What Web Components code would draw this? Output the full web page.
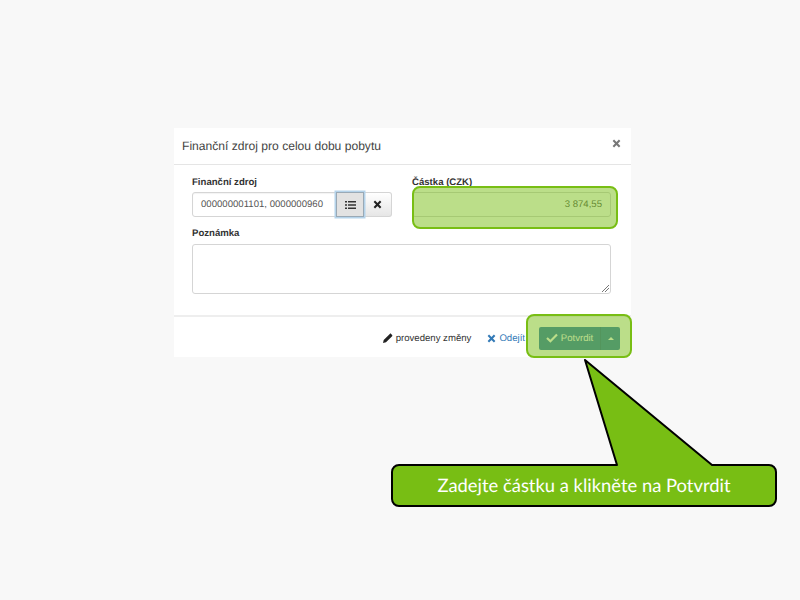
<!DOCTYPE html>
<html lang="cs"><head><meta charset="utf-8"><title>Finanční zdroj</title>
<style>html,body{margin:0;padding:0;background:#f8f8f8}</style></head>
<body>
<tutorial-slide>
  <fin-dialog></fin-dialog>
  <highlight-box style="left:412px;top:186px;width:206px;height:43px"></highlight-box>
  <highlight-box style="left:526px;top:314px;width:106px;height:44px"></highlight-box>
  <callout-note>Zadejte částku a klikněte na Potvrdit</callout-note>
</tutorial-slide>
<script>
const icons={
 list:'<svg width="11" height="10" viewBox="0 0 11 10"><path fill="#333" d="M0 1h2v1.6H0zM3 1h8v1.6H3zM0 4.2h2v1.6H0zM3 4.2h8v1.6H3zM0 7.4h2V9H0zM3 7.4h8V9H3z"/></svg>',
 x:c=>`<svg width="9" height="9" viewBox="0 0 10 10"><path fill="none" stroke="${c}" stroke-width="2.3" d="M1.5 1.5l7 7M8.5 1.5l-7 7"/></svg>`,
 pencil:'<svg width="10" height="10" viewBox="0 0 10 10"><path fill="#222" d="M0 10l.7-3L6.8.9c.4-.4.9-.4 1.3 0l1 1c.4.4.4.9 0 1.3L3 9.3z"/></svg>',
 ok:'<svg width="12" height="10" viewBox="0 0 12 10"><path fill="none" stroke="#fff" stroke-width="2.2" d="M1 5l3.4 3.2L11 1.5"/></svg>'
};
function def(name,css,html){customElements.define(name,class extends HTMLElement{constructor(){super();this.attachShadow({mode:'open'}).innerHTML=`<style>${css}</style>${html}`;}});}

def('tutorial-slide',`:host{display:block;position:relative;width:800px;height:600px;overflow:hidden;background:#f8f8f8;padding:128px 0 0 174px;box-sizing:border-box;font-family:"Liberation Sans",Arial,sans-serif;text-rendering:geometricPrecision}`,`<slot></slot>`);

def('form-field',`:host{display:flex;flex-direction:column;color:#333}
label{font:bold 9.6px/14px "Liberation Sans",Arial,sans-serif;height:12px;margin-bottom:var(--label-gap,4px)}`,`<label><slot name="label"></slot></label><slot></slot>`);

def('icon-button',`:host{display:flex;align-items:center;justify-content:center;box-sizing:border-box;width:28px;height:25px;background:linear-gradient(#fff,#e6e6e6);border:1px solid #d5d5d5}
:host([active]){background:#e2e2e2;border-color:#9aa9b5;box-shadow:0 0 0 1.5px #b5d3ea;position:relative;z-index:1}
:host([end]){border-radius:0 3px 3px 0;border-left:0}`,`<slot></slot>`);

def('fin-dialog',`:host{display:block;width:457px;height:229px;background:#fff;color:#333;font-family:"Liberation Sans",Arial,sans-serif}
header{display:flex;justify-content:space-between;align-items:center;height:37px;box-sizing:border-box;padding:0 10px 0 8px;border-bottom:1px solid #e5e5e5;font-size:12.1px}
header span{color:#444}
header svg{margin-top:-5px}
.body{height:152px;box-sizing:border-box;padding:11px 20px 0 18px;border-bottom:2px solid #eee}
.row{display:grid;grid-template-columns:200px 199px;column-gap:20px}
.group{display:flex}
.val{box-sizing:border-box;height:25px;border:1px solid #d5d5d5;background:#fff;font-size:9.6px;line-height:23px;color:#555}
.src{flex:1;border-radius:3px 0 0 3px;padding-left:8px;box-shadow:inset 0 1px 1px rgba(0,0,0,.05)}
.amt{text-align:right;padding-right:8px;border-radius:3px}
.note{margin-top:10px;--label-gap:5px}
.ta{box-sizing:border-box;height:50px;border:1px solid #d5d5d5;border-radius:3px;position:relative}
.ta svg{position:absolute;right:1px;bottom:1px}
footer{display:flex;align-items:center;justify-content:flex-end;height:40px;box-sizing:border-box;padding:2px 11px 0 0;font-size:9.6px}
.act{display:flex;align-items:center;gap:3px}
.chg{margin-right:16px;color:#333}
.leave{color:#337ab7;margin-right:14px}
.split{display:flex;height:23px;border-radius:2px;background:#337ab7;color:#fff}
.split div{display:flex;align-items:center}
.main{width:61px;justify-content:center;gap:3px;border-right:1px solid #2e6da4}
.car{width:19px;justify-content:center}
.car i{border:3.5px solid transparent;border-bottom:3.5px solid #fff;border-top:0}`,
`<header><span>Finanční zdroj pro celou dobu pobytu</span>${icons.x('#777')}</header>
<div class="body">
 <div class="row">
  <form-field><span slot="label">Finanční zdroj</span>
   <div class="group"><div class="val src">000000001101, 0000000960</div>
   <icon-button active>${icons.list}</icon-button><icon-button end>${icons.x('#222')}</icon-button></div>
  </form-field>
  <form-field><span slot="label">Částka (CZK)</span><div class="val amt">3 874,55</div></form-field>
 </div>
 <form-field class="note"><span slot="label">Poznámka</span>
  <div class="ta"><svg width="8" height="8" viewBox="0 0 8 8"><path stroke="#777" d="M1 8l7-7M4 8l4-4"/></svg></div></form-field>
</div>
<footer>
 <span class="act chg">${icons.pencil}<span>provedeny změny</span></span>
 <span class="act leave">${icons.x('#337ab7')}<span>Odejít</span></span>
 <div class="split"><div class="main">${icons.ok}<span>Potvrdit</span></div><div class="car"><i></i></div></div>
</footer>`);

def('highlight-box',`:host{display:block;position:absolute;box-sizing:border-box;background:rgba(120,190,20,.5);border:2px solid #78be14;border-radius:8px}`,``);

def('callout-note',`:host{display:block;position:absolute;left:391px;top:359px;width:386px;height:148px;font-family:Lato,"Open Sans",sans-serif}
svg{position:absolute;inset:0}
p{position:absolute;left:0;right:0;top:105px;height:41px;margin:0;display:flex;align-items:center;justify-content:center;color:#fff;font-size:18.4px}`,
`<svg width="386" height="148" viewBox="0 0 386 148"><path fill="#78be14" stroke="#000" stroke-width="2" stroke-linejoin="round" d="M8 106H226L194 1L321 106H378a7 7 0 0 1 7 7V140a7 7 0 0 1-7 7H8a7 7 0 0 1-7-7V113a7 7 0 0 1 7-7Z"/></svg><p><slot></slot></p>`);
</script>
</body></html>
